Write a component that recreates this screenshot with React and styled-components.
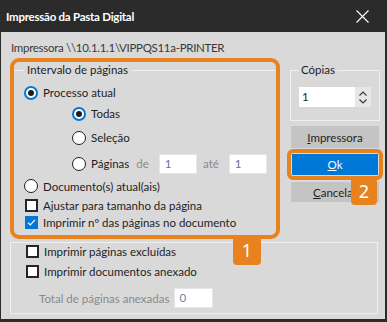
import React from "react";
import styled, { createGlobalStyle } from "styled-components";

const GlobalStyle = createGlobalStyle`
  html, body {
    margin: 0;
    padding: 0;
    background: #2b2b2b;
  }
  body {
    font-family: Lato, "Segoe UI", sans-serif;
    font-size: 11.5px;
    color: #1e1e1e;
  }
`;

const ORANGE = "#e8821e";
const BLUE = "#0078d7";

const Window = styled.div`
  width: 387px;
  height: 322px;
  box-sizing: border-box;
  padding: 0 2px 3px 1px;
  background: #2b2b2b;
  display: flex;
  flex-direction: column;
`;

const TitleBar = styled.div`
  height: 32px;
  flex-shrink: 0;
  display: flex;
  align-items: center;
  justify-content: space-between;
  padding: 0 16px 0 5px;
  color: #ffffff;
  font-size: 11.5px;
  font-weight: 700;
  letter-spacing: -0.25px;
`;

const Body = styled.div`
  flex: 1;
  background: #d9d9d9;
  padding: 8px 0 0 9px;
`;

const PrinterLine = styled.div`
  height: 16px;
  line-height: 16px;
  padding-left: 1px;
  color: #3a3a3a;
  letter-spacing: -0.3px;
`;

const Upper = styled.div`
  display: flex;
  align-items: flex-start;
  margin-top: 2px;
`;

const LeftSection = styled.div`
  position: relative;
  width: 270px;
  height: 181px;
`;

const Highlight = styled.div`
  position: absolute;
  inset: 0;
  border: 4px solid ${ORANGE};
  border-radius: 9px;
  pointer-events: none;
  z-index: 2;
`;

const Badge = styled.div`
  position: absolute;
  z-index: 3;
  background: ${ORANGE};
  color: #ffffff;
  font-family: "Noto Sans", sans-serif;
  font-size: 18px;
  display: flex;
  align-items: center;
  justify-content: center;
  border-radius: 0 0 4px 4px;
`;

const Group = styled.fieldset`
  margin: ${(p) => p.$margin};
  padding: ${(p) => p.$padding};
  border: 1px solid #efefef;
  min-width: 0;
  box-sizing: border-box;
  width: ${(p) => p.$width}px;
`;

const Legend = styled.legend`
  padding: 0 ${(p) => p.$pad || 3}px;
  margin: 0;
  line-height: 16px;
  color: #1e1e1e;
`;

const Option = styled.div`
  height: ${(p) => p.$h}px;
  display: flex;
  align-items: center;
  padding-left: ${(p) => p.$indent || 0}px;
  white-space: nowrap;
`;

const Radio = styled.span`
  width: 14px;
  height: 14px;
  box-sizing: border-box;
  border-radius: 50%;
  background: #ffffff;
  border: ${(p) => (p.$checked ? `2px solid ${BLUE}` : "1.5px solid #1e1e1e")};
  display: flex;
  align-items: center;
  justify-content: center;
  margin-right: 5px;
  flex-shrink: 0;

  &::after {
    content: "";
    display: ${(p) => (p.$checked ? "block" : "none")};
    width: 6px;
    height: 6px;
    border-radius: 50%;
    background: #1e1e1e;
  }
`;

const Check = styled.span`
  width: 13px;
  height: 13px;
  box-sizing: border-box;
  margin: 0 5px 0 1px;
  flex-shrink: 0;
  background: ${(p) => (p.$checked ? BLUE : "#ffffff")};
  border: 2px solid ${(p) => (p.$checked ? BLUE : "#262626")};
  display: flex;
  align-items: center;
  justify-content: center;
`;

const Muted = styled.span`
  color: #8a8a8a;
  margin: ${(p) => p.$margin};
`;

const Field = styled.div`
  width: ${(p) => p.$width}px;
  height: 20px;
  box-sizing: border-box;
  background: #ffffff;
  border: 1px solid #e6e6e6;
  padding-left: ${(p) => p.$pad || 5}px;
  line-height: 18px;
  color: ${(p) => p.$color || "#6e6e8e"};
`;

const RightSection = styled.div`
  width: 96px;
  margin-left: 7px;
  display: flex;
  flex-direction: column;
`;

const SpinBox = styled.div`
  display: flex;
  height: 20px;
`;

const SpinValue = styled.div`
  width: 58px;
  height: 20px;
  box-sizing: border-box;
  background: #ffffff;
  padding-left: 3px;
  line-height: 20px;
  color: #1e1e1e;
`;

const Spinner = styled.div`
  width: 16px;
  height: 20px;
  background: #e6e6e6;
  display: flex;
  flex-direction: column;
  align-items: center;
  justify-content: center;
  gap: 3px;
`;

const Button = styled.button`
  width: ${(p) => (p.$primary ? "100%" : "88px")};
  height: ${(p) => p.$h}px;
  margin: ${(p) => p.$margin || 0};
  border: none;
  padding: 0;
  background: ${(p) => (p.$primary ? BLUE : "#c4c4c4")};
  color: ${(p) => (p.$primary ? "#ffffff" : "#1e1e1e")};
  font-family: inherit;
  font-size: inherit;
  display: block;
`;

const OkFrame = styled.div`
  position: relative;
  width: 96px;
  box-sizing: border-box;
  margin-top: 1px;
  border: 4px solid ${ORANGE};
  border-radius: 6px;
  padding: 1px;
`;

const LowerGroup = styled.div`
  width: 368px;
  height: 72px;
  box-sizing: border-box;
  margin-top: 3px;
  border: 1px solid #efefef;
  padding-left: 14px;
`;

const TotalRow = styled.div`
  display: flex;
  align-items: center;
  margin-top: 5px;
  padding-left: 14px;
  height: 20px;
`;

function CloseIcon() {
  return (
    <svg width="13" height="13" viewBox="0 0 13 13">
      <path d="M0.5 0.5 L12.5 12.5 M12.5 0.5 L0.5 12.5" stroke="#ffffff" strokeWidth="1.1" />
    </svg>
  );
}

function Tick() {
  return (
    <svg width="9" height="9" viewBox="0 0 9 9">
      <polyline points="1,4.8 3.3,7 8,1.8" fill="none" stroke="#ffffff" strokeWidth="1.2" />
    </svg>
  );
}

function Chevron({ up }) {
  return (
    <svg width="8" height="5" viewBox="0 0 8 5">
      <polyline
        points={up ? "0.5,4.5 4,1 7.5,4.5" : "0.5,0.5 4,4 7.5,0.5"}
        fill="none"
        stroke="#333333"
        strokeWidth="1.1"
      />
    </svg>
  );
}

export default function App() {
  return (
    <>
      <GlobalStyle />
      <Window>
        <TitleBar>
          <span>Impressão da Pasta Digital</span>
          <CloseIcon />
        </TitleBar>
        <Body>
          <PrinterLine>Impressora \\10.1.1.1\VIPPQS11a-PRINTER</PrinterLine>
          <Upper>
            <LeftSection>
              <Group $margin="4px 2px 0" $padding="4px 10px 4px 11px" $width={266}>
                <Legend>Intervalo de páginas</Legend>
                <Option $h={21}>
                  <Radio $checked />
                  Processo atual
                </Option>
                <Option $h={21} $indent={48}>
                  <Radio $checked />
                  Todas
                </Option>
                <Option $h={27} $indent={48}>
                  <Radio />
                  Seleção
                </Option>
                <Option $h={25} $indent={48}>
                  <Radio />
                  Páginas
                  <Muted $margin="0 10px 0 7px">de</Muted>
                  <Field $width={39}>1</Field>
                  <Muted $margin="0 10px 0 6px">até</Muted>
                  <Field $width={39}>1</Field>
                </Option>
                <Option $h={20}>
                  <Radio />
                  Documento(s) atual(ais)
                </Option>
                <Option $h={18}>
                  <Check />
                  Ajustar para tamanho da página
                </Option>
                <Option $h={17}>
                  <Check $checked>
                    <Tick />
                  </Check>
                  Imprimir nº das páginas no documento
                </Option>
              </Group>
              <Highlight />
              <Badge style={{ top: "calc(100% - 4px)", left: 223, width: 28, height: 30 }}>1</Badge>
            </LeftSection>
            <RightSection>
              <Group $margin="4px 3px 0" $padding="9px 8px 13px 8px" $width={90}>
                <Legend $pad={2}>Cópias</Legend>
                <SpinBox>
                  <SpinValue>1</SpinValue>
                  <Spinner>
                    <Chevron up />
                    <Chevron />
                  </Spinner>
                </SpinBox>
              </Group>
              <Button $h={22} $margin="5px 0 0 4px">
                <u>I</u>mpressora
              </Button>
              <OkFrame>
                <Button $primary $h={21}>
                  <u>O</u>k
                </Button>
                <Badge style={{ top: "100%", right: 2, width: 26, height: 29 }}>2</Badge>
              </OkFrame>
              <Button $h={20} $margin="2px 0 0 4px">
                <u>C</u>ancelar
              </Button>
            </RightSection>
          </Upper>
          <LowerGroup>
            <Option $h={16}>
              <Check />
              Imprimir páginas excluídas
            </Option>
            <Option $h={24}>
              <Check />
              Imprimir documentos anexado
            </Option>
            <TotalRow>
              <Muted $margin="0 5px 0 0">Total de páginas anexadas</Muted>
              <Field $width={39} $pad={4} $color="#6f84a3">
                0
              </Field>
            </TotalRow>
          </LowerGroup>
        </Body>
      </Window>
    </>
  );
}
